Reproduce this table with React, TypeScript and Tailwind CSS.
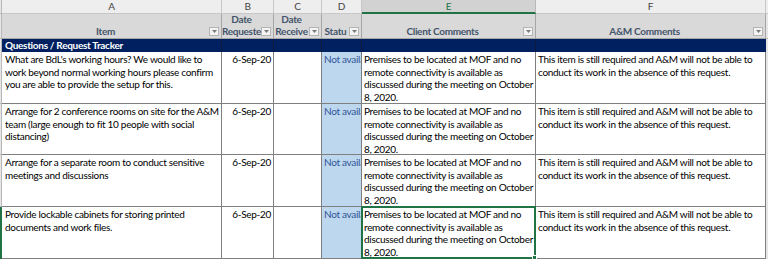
import * as React from 'react'

const rows = [
  {
    item: ["What are BdL's working hours? We would like to", 'work beyond normal working hours please confirm', 'you are able to provide the setup for this.'],
    date: '6-Sep-20'
  },
  {
    item: ['Arrange for 2 conference rooms on site for the A&M', 'team (large enough to fit 10 people with social', 'distancing)'],
    date: '6-Sep-20'
  },
  {
    item: ['Arrange for a separate room to conduct sensitive', 'meetings and discussions'],
    date: '6-Sep-20'
  },
  {
    item: ['Provide lockable cabinets for storing printed', 'documents and work files.'],
    date: '6-Sep-20'
  }
]

const client = ['Premises to be located at MOF and no', 'remote connectivity is available as', 'discussed during the meeting on October', '8, 2020.']
const am = ['This item is still required and A&M will not be able to', 'conduct its work in the absence of this request.']

function Lines({ lines }: { lines: string[] }) {
  return (
    <>
      {lines.map((l) => (
        <div key={l} className="whitespace-nowrap">
          {l}
        </div>
      ))}
    </>
  )
}

function FilterBtn() {
  return (
    <div className="absolute right-[2px] bottom-[2px] w-[10px] h-[9px] bg-[#f4f4f4] border border-[#b4b4b4] flex items-center justify-center">
      <svg width="5" height="3" viewBox="0 0 5 3">
        <path d="M0 0 L5 0 L2.5 3 Z" fill="#7a7a7a" />
      </svg>
    </div>
  )
}

function HeadCell({ lines }: { lines: string[] }) {
  return (
    <div className="relative bg-[#d9d9d9] border-r border-b border-[#a6a6a6] pr-[12px] pb-[1px] font-bold text-[#44546a] leading-[12px] overflow-hidden">
      <div className="h-full flex flex-col justify-end items-center overflow-hidden">
        {lines.map((l) => (
          <div key={l} className="whitespace-nowrap">
            {l}
          </div>
        ))}
      </div>
      <FilterBtn />
    </div>
  )
}

export default function App() {
  const letters = ['A', 'B', 'C', 'D', 'E', 'F']
  return (
    <div
      className="w-[768px] h-[260px] overflow-hidden bg-white text-[10px] tracking-[-0.3px] text-black"
      style={{ fontFamily: 'Lato, "Liberation Sans", sans-serif' }}
    >
      <div className="grid grid-cols-[2px_220px_52px_48px_40px_174px_230px_2px] grid-rows-[14px_25px_13px_52px_51px_52px_52px]">
        {/* column letters */}
        <div className="bg-[#e6e6e6] border-r border-b border-[#b8b8b8]" />
        {letters.map((l) => (
          <div
            key={l}
            className={
              l === 'E'
                ? 'bg-[#d2d2d2] border-r border-[#b8b8b8] border-b-2 border-b-[#217346] text-[#217346] flex items-center justify-center'
                : 'bg-[#eeeeee] border-r border-b border-[#c8c8c8] text-[#444444] flex items-center justify-center'
            }
          >
            {l}
          </div>
        ))}
        <div className="bg-[#eeeeee] border-b border-[#c8c8c8]" />

        {/* header row */}
        <div className="bg-[#e6e6e6] border-r border-b border-[#b8b8b8]" />
        <HeadCell lines={['Item']} />
        <HeadCell lines={['Date', 'Requeste']} />
        <HeadCell lines={['Date', 'Receive']} />
        <HeadCell lines={['Statu']} />
        <HeadCell lines={['Client Comments']} />
        <HeadCell lines={['A&M Comments']} />
        <div className="bg-[#e6e6e6] border-b border-[#b8b8b8]" />

        {/* section row */}
        <div className="bg-[#e6e6e6] border-r border-[#b8b8b8]" />
        <div className="bg-[#002060] text-white font-bold pl-[3px] leading-[13px] whitespace-nowrap border-r border-[#0d1b3e]">
          Questions / Request Tracker
        </div>
        <div className="bg-[#002060] border-r border-[#0d1b3e]" />
        <div className="bg-[#002060] border-r border-[#0d1b3e]" />
        <div className="bg-[#002060] border-r border-[#0d1b3e]" />
        <div className="bg-[#002060] border-r border-[#0d1b3e]" />
        <div className="bg-[#002060]" />
        <div className="bg-[#e6e6e6]" />

        {rows.map((r, i) => {
          const last = i === rows.length - 1
          return (
            <React.Fragment key={i}>
              <div className={last ? 'bg-[#e6e6e6] border-r-2 border-[#217346]' : 'bg-[#e6e6e6] border-r border-b border-[#b8b8b8]'} />
              <div className="border-r border-b border-[#7f7f7f] pl-[3px] pt-[1px] leading-[12.5px] overflow-hidden">
                <Lines lines={r.item} />
              </div>
              <div className="border-r border-b border-[#7f7f7f] pr-[2px] pt-[1px] leading-[12.5px] text-right">{r.date}</div>
              <div className="border-r border-b border-[#7f7f7f]" />
              <div className="bg-[#bdd7ee] border-r border-b border-[#7f7f7f] pl-[2px] pt-[1px] leading-[12.5px] text-[#2f5597] whitespace-nowrap overflow-hidden">
                Not available
              </div>
              <div className="relative border-r border-b border-[#7f7f7f] pl-[2px] pt-[1px] leading-[12.5px]">
                <div className="h-full overflow-hidden">
                  <Lines lines={client} />
                </div>
                {last && (
                  <div className="absolute -left-[1px] -top-[1px] -right-[1px] -bottom-[1px] border-2 border-[#217346]">
                    <div className="absolute -right-[3px] -bottom-[3px] w-[5px] h-[5px] bg-[#217346] border border-white" />
                  </div>
                )}
              </div>
              <div className="border-r border-b border-[#7f7f7f] pl-[2px] pt-[1px] leading-[12.5px] overflow-hidden">
                <Lines lines={am} />
              </div>
              <div className="bg-[#e6e6e6]" />
            </React.Fragment>
          )
        })}
      </div>
    </div>
  )
}
